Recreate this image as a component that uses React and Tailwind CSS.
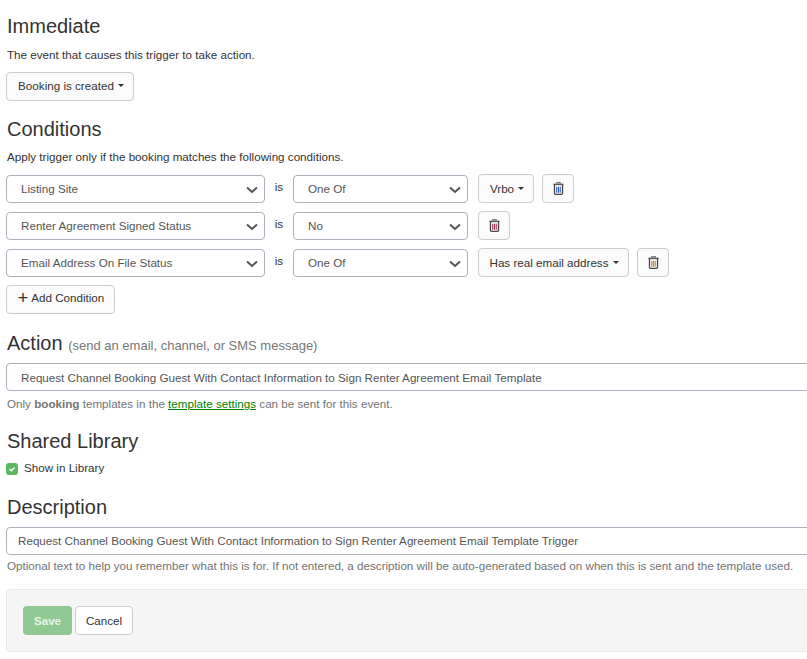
import React from "react";

const Caret = () => (
  <span className="inline-block ml-1 align-middle w-0 h-0 border-t-[3px] border-t-[#333] border-x-[3px] border-x-transparent" />
);

const Chevron = () => (
  <svg width="12" height="8" viewBox="0 0 12 8" className="absolute right-[6px] top-[10px]">
    <path d="M1 1.5 L6 6 L11 1.5" fill="none" stroke="#555" strokeWidth="2" />
  </svg>
);

const Select = ({ value, className }) => (
  <div
    className={`relative h-[28px] shrink-0 rounded-[4px] border border-[#aab2bd] bg-white pl-[14px] leading-[25px] text-[#555] ${className}`}
  >
    {value}
    <Chevron />
  </div>
);

const Trash = ({ color }) => (
  <svg width="11" height="13" viewBox="0 0 12 14">
    <path d="M4 1.5 V0.8 H8 V1.5" fill="none" stroke="#555" strokeWidth="1.2" />
    <path d="M0.5 2.5 H11.5" stroke="#555" strokeWidth="1.6" />
    <path d="M1.6 3 V12.2 Q1.6 13.3 2.8 13.3 H9.2 Q10.4 13.3 10.4 12.2 V3" fill="none" stroke="#444" strokeWidth="1.4" />
    <path d="M4.1 5 V11.5 M6 5 V11.5 M7.9 5 V11.5" stroke={color} strokeWidth="1.2" />
  </svg>
);

const Btn = ({ children, className = "" }) => (
  <div
    className={`flex h-[29px] shrink-0 items-center rounded-[4px] border border-[#ccc] bg-[#fbfbfb] text-[#333] ${className}`}
  >
    {children}
  </div>
);

const TrashBtn = ({ color }) => (
  <Btn className="w-[32px] justify-center">
    <Trash color={color} />
  </Btn>
);

const Row = ({ field, op, children }) => (
  <div className="flex h-[29px] items-center">
    <Select value={field} className="w-[259px]" />
    <span className="w-[28px] shrink-0 pb-[4px] text-center text-[#333]">is</span>
    <Select value={op} className="w-[175px]" />
    <div className="ml-[10px] flex gap-[8px]">{children}</div>
  </div>
);

const Heading = ({ children, className = "" }) => (
  <h3 className={`pl-[1px] text-[20px] leading-[22px] text-[#333] ${className}`}>{children}</h3>
);

export default function App() {
  return (
    <div className="h-[659px] w-[807px] overflow-hidden bg-white pl-[6px] font-['Liberation_Sans',Arial,sans-serif] text-[11.65px] text-[#333]">
      <Heading className="pt-[15px]">Immediate</Heading>
      <p className="mt-[9px] pl-[1px] leading-[17px]">The event that causes this trigger to take action.</p>
      <Btn className="mt-[9px] h-[28px] w-[128px] justify-center pb-[2px] pl-[2px]">
        Booking is created
        <Caret />
      </Btn>

      <Heading className="mt-[17px]">Conditions</Heading>
      <p className="mt-[8px] pl-[1px] leading-[17px]">Apply trigger only if the booking matches the following conditions.</p>
      <div className="mt-[9px] flex flex-col gap-[8px]">
        <Row field="Listing Site" op="One Of">
          <Btn className="w-[56px] justify-center pl-[2px]">
            Vrbo
            <Caret />
          </Btn>
          <TrashBtn color="#2f5fb3" />
        </Row>
        <Row field="Renter Agreement Signed Status" op="No">
          <TrashBtn color="#a03050" />
        </Row>
        <Row field="Email Address On File Status" op="One Of">
          <Btn className="w-[151px] justify-center pl-[1px]">
            Has real email address
            <Caret />
          </Btn>
          <TrashBtn color="#b08a20" />
        </Row>
      </div>
      <Btn className="mt-[8px] w-[109px] justify-center pb-[3px] pl-[1px]">
        <span className="mr-[3px] text-[18px] leading-none">+</span>
        Add Condition
      </Btn>

      <Heading className="mt-[18px]">
        Action <span className="text-[13px] text-[#777]">(send an email, channel, or SMS message)</span>
      </Heading>
      <div className="mt-[6px] h-[28px] w-[830px] rounded-[4px] border border-[#aab2bd] bg-white pl-[14px] leading-[28px] text-[#555]">
        Request Channel Booking Guest With Contact Information to Sign Renter Agreement Email Template
      </div>
      <p className="mt-[4px] pl-[1px] leading-[17px] text-[#737373]">
        Only <b>booking</b> templates in the <a className="text-[#008000] underline">template settings</a> can be sent
        for this event.
      </p>

      <Heading className="mt-[18px]">Shared Library</Heading>
      <div className="mt-[8px] flex h-[17px] items-center">
        <span className="flex h-[12px] w-[12px] items-center justify-center rounded-[3px] bg-[#5cb85c]">
          <svg width="8" height="8" viewBox="0 0 8 8">
            <path d="M1.5 4 L3.4 5.8 L6.5 2.5" fill="none" stroke="#fff" strokeWidth="1.4" />
          </svg>
        </span>
        <span className="ml-[6px] pb-[2px]">Show in Library</span>
      </div>

      <Heading className="mt-[19px]">Description</Heading>
      <div className="mt-[9px] h-[28px] w-[830px] rounded-[4px] border border-[#aab2bd] bg-white pl-[11px] leading-[26px] text-[#555]">
        Request Channel Booking Guest With Contact Information to Sign Renter Agreement Email Template Trigger
      </div>
      <p className="mt-[2px] pl-[1px] leading-[17px] whitespace-nowrap text-[#737373]">
        Optional text to help you remember what this is for. If not entered, a description will be auto-generated based
        on when this is sent and the template used.
      </p>

      <div className="mt-[15px] flex h-[63px] w-[830px] items-center gap-[3px] rounded-[4px] border border-[#e9e9e9] bg-[#f5f5f5] pl-[16px]">
        <div className="flex h-[29px] w-[49px] items-center justify-center rounded-[4px] bg-[#8fc891] font-bold text-[#e8f4e8]">
          Save
        </div>
        <Btn className="w-[58px] justify-center bg-white">Cancel</Btn>
      </div>
    </div>
  );
}
